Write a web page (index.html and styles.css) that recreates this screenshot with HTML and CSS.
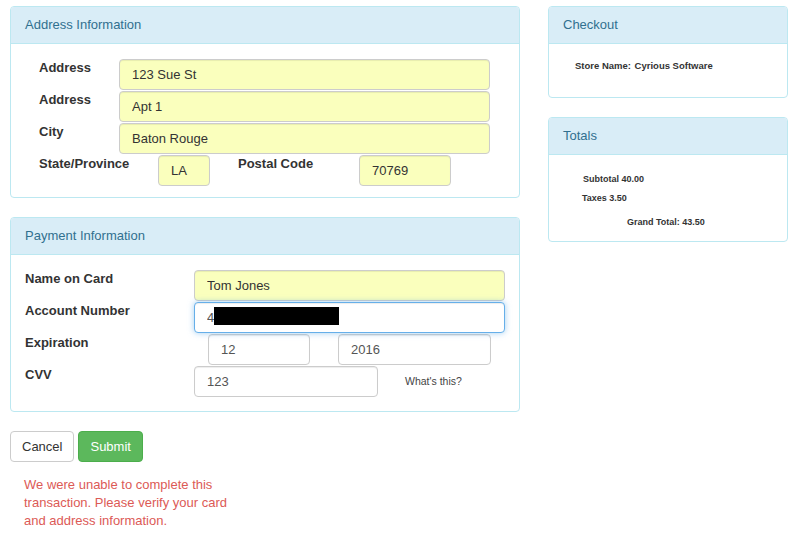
FILE: index.html
```html
<!doctype html>
<html>
<head>
    <meta charset="utf-8">
    <title>Checkout</title>
    <link rel="stylesheet" href="styles.css">
</head>

<body>
    <div class="page">
        <div class="main">
            <div class="panel panel-address">
                <div class="panel-heading">Address Information</div>
                <div class="panel-body address">
                    <div class="row">
                        <label class="lbl-addr">Address</label>
                        <input class="field fill addr" type="text" value="123 Sue St" />
                    </div>
                    <div class="row">
                        <label class="lbl-addr">Address</label>
                        <input class="field fill addr" type="text" value="Apt 1" />
                    </div>
                    <div class="row">
                        <label class="lbl-addr">City</label>
                        <input class="field fill addr" type="text" value="Baton Rouge" />
                    </div>
                    <div class="row">
                        <label class="lbl-state">State/Province</label>
                        <input class="field fill state" type="text" value="LA" />
                        <label class="lbl-postal">Postal Code</label>
                        <input class="field fill postal" type="text" value="70769" />
                    </div>
                </div>
            </div>

            <div class="panel panel-payment">
                <div class="panel-heading">Payment Information</div>
                <div class="panel-body payment">
                    <div class="row">
                        <label class="lbl-pay">Name on Card</label>
                        <input class="field fill card" type="text" value="Tom Jones" />
                    </div>
                    <div class="row">
                        <label class="lbl-pay">Account Number</label>
                        <div class="masked">
                            <input class="field focus card" type="text" value="4" />
                            <span class="redact"></span>
                        </div>
                    </div>
                    <div class="row">
                        <label class="lbl-pay">Expiration</label>
                        <input class="field month" type="text" value="12" />
                        <input class="field year" type="text" value="2016" />
                    </div>
                    <div class="row">
                        <label class="lbl-pay">CVV</label>
                        <input class="field cvv" type="text" value="123" />
                        <span class="whats">What's this?</span>
                    </div>
                </div>
            </div>

            <div class="actions">
                <button class="btn">Cancel</button>
                <button class="btn btn-success">Submit</button>
            </div>
            <p class="error">We were unable to complete this transaction. Please verify your card and address information.</p>
        </div>

        <div class="side">
            <div class="panel panel-checkout">
                <div class="panel-heading">Checkout</div>
                <div class="panel-body checkout">
                    <span class="store">Store Name:</span> <span class="store">Cyrious Software</span>
                </div>
            </div>
            <div class="panel panel-totals">
                <div class="panel-heading">Totals</div>
                <div class="panel-body totals">
                    <div class="subtotal">Subtotal 40.00</div>
                    <div class="taxes">Taxes 3.50</div>
                    <div class="grand">Grand Total: 43.50</div>
                </div>
            </div>
        </div>
    </div>
</body>
</html>
```

FILE: styles.css
```css
* {
  box-sizing: border-box;
}

html {
  font-family: "Liberation Sans", Arial, sans-serif;
  font-size: 13px;
  color: #333333;
}

body {
  margin: 0;
  background: #ffffff;
}

.page {
  display: flex;
  gap: 28px;
  padding: 6px 10px;
}

.main {width: 510px;}
.side {width: 240px;}

/* panels */
.panel {
  border: 1px solid #bce8f1;
  border-radius: 4px;
  background: #ffffff;
}

.panel-heading {
  background-color: #d9edf7;
  color: #31708f;
  border-bottom: 1px solid #bce8f1;
  border-radius: 3px 3px 0 0;
  padding: 9px 14px;
  line-height: 18px;
  font-size: 13px;
}

.panel-address {margin-bottom: 19px;}
.panel-checkout {margin-bottom: 19px;}

.row {
  display: flex;
  align-items: flex-start;
  margin-bottom: 1px;
}

.row:last-child {margin-bottom: 0;}

label {
  font-weight: bold;
  line-height: 18px;
}

/* inputs */
.field {
  font: 13px "Liberation Sans", Arial, sans-serif;
  color: #555555;
  height: 31px;
  padding: 0 12px;
  border: 1px solid #cccccc;
  border-radius: 4px;
  background: #ffffff;
  box-shadow: inset 0 1px 1px rgba(0,0,0,0.075);
  outline: none;
}

.fill {
  background: #faffbd;
  color: #333333;
}

.focus {
  border-color: #66afe9;
  box-shadow: inset 0 1px 1px rgba(0,0,0,0.075), 0 0 6px rgba(102,175,233,0.6);
}

/* address */
.address {padding: 15px 0 11px 28px;}
.lbl-addr {width: 80px;}
.addr {width: 371px;}
.lbl-state {width: 119px;}
.state {width: 52px;}
.lbl-postal {width: 121px; margin-left: 28px;}
.postal {width: 92px;}

/* payment */
.payment {padding: 15px 0 14px 14px;}
.lbl-pay {width: 169px;}
.card {width: 311px;}
.masked {position: relative;}
.redact {
  position: absolute;
  left: 20px;
  top: 5px;
  width: 125px;
  height: 18px;
  background: #000000;
}
.month {width: 102px; margin-left: 14px;}
.year {width: 153px; margin-left: 28px;}
.cvv {width: 184px;}
.whats {
  font-size: 10.5px;
  color: #444444;
  margin-left: 27px;
  line-height: 31px;
}

/* buttons */
.actions {
  margin-top: 19px;
  display: flex;
  gap: 4px;
}

.btn {
  font: 13px "Liberation Sans", Arial, sans-serif;
  height: 31px;
  padding: 0 11px;
  border: 1px solid #cccccc;
  border-radius: 4px;
  background: #ffffff;
  color: #333333;
}

.btn-success {
  background: #5cb85c;
  border-color: #4cae4c;
  color: #ffffff;
}

.error {
  color: #dc5a56;
  margin: 14px 0 0 14px;
  width: 215px;
  line-height: 18px;
}

/* side */
.checkout {padding: 13px 14px 24px 26px;}
.store {font-size: 9.5px; font-weight: bold; line-height: 14px;}

.totals {padding: 17px 14px 12px 0; font-size: 9px; font-weight: bold;}
.totals div {line-height: 14px;}
.subtotal {margin-left: 34px;}
.taxes {margin-left: 33px; margin-top: 5px;}
.grand {margin-left: 78px; margin-top: 10px;}
```
